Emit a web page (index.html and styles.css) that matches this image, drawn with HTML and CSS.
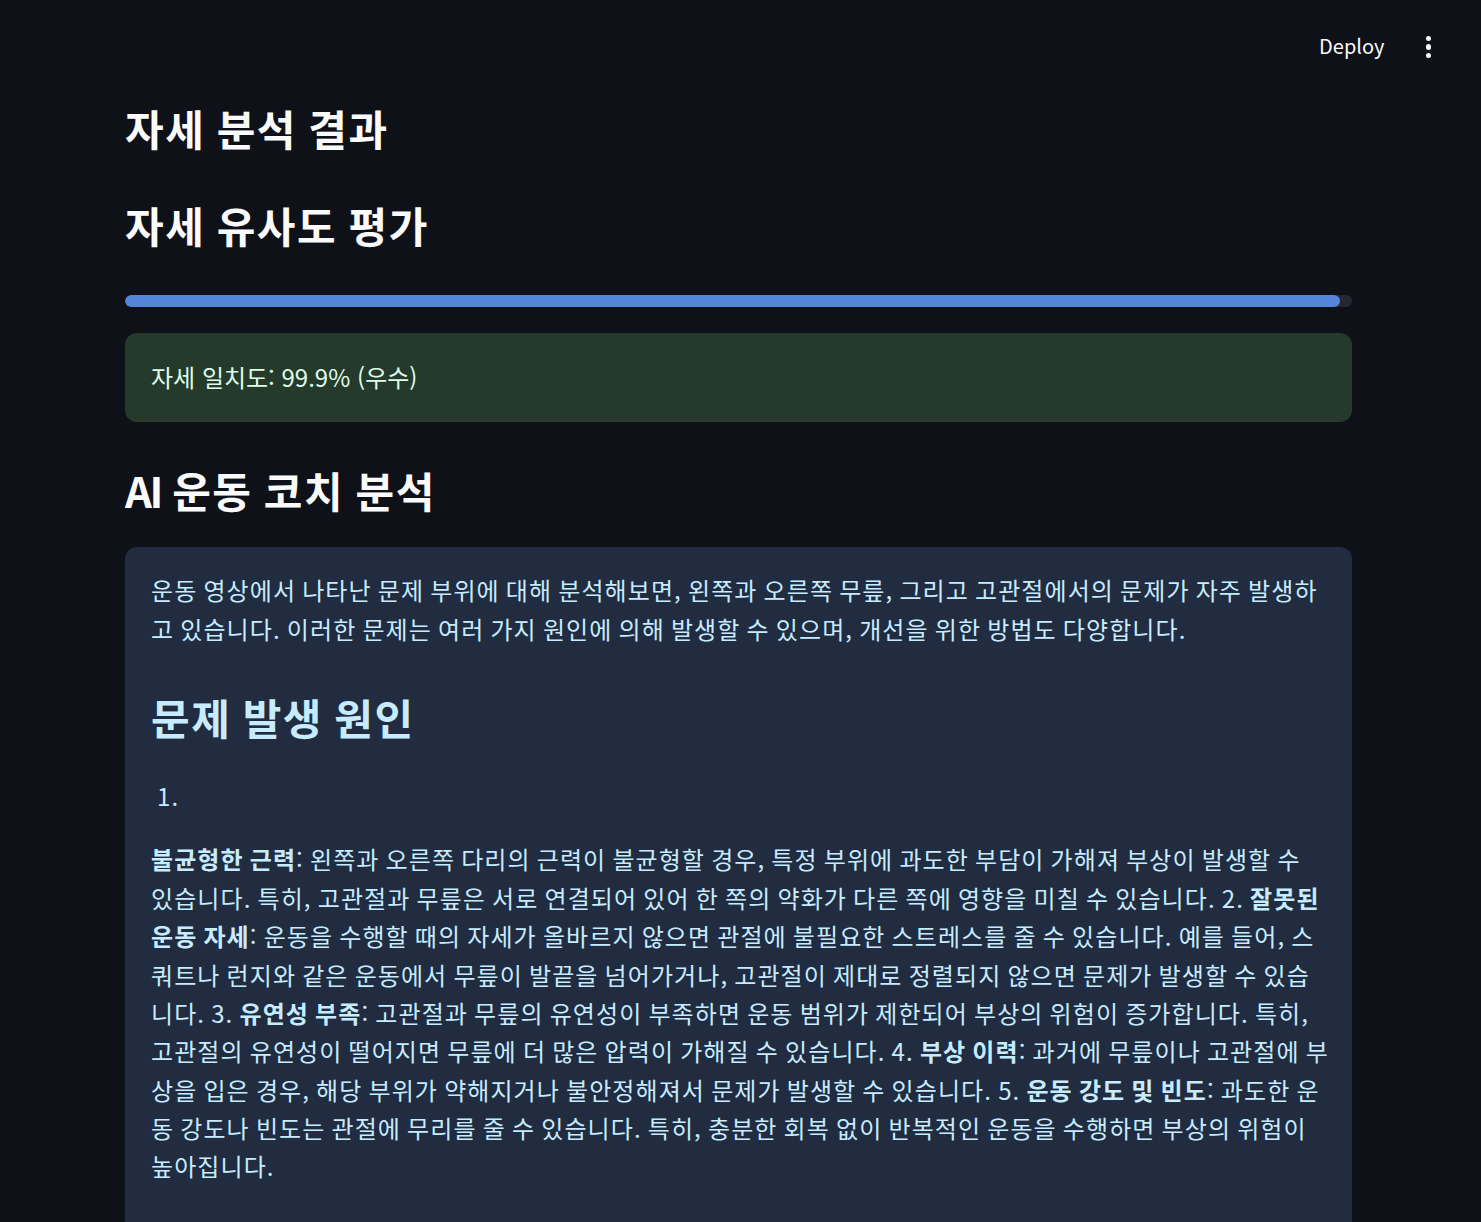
FILE: index.html
```html
<!DOCTYPE html>
<html lang="ko">
<head>
<meta charset="utf-8">
<title>자세 분석 결과</title>
<link rel="stylesheet" href="styles.css">
</head>
<body>
<header class="topbar">
  <span class="deploy">Deploy</span>
  <span class="kebab" aria-label="menu"><i></i><i></i><i></i></span>
</header>
<main class="main">
  <h1 class="title">자세 분석 결과</h1>
  <h2 class="header h-sim">자세 유사도 평가</h2>
  <div class="progress"><div class="progress-fill" style="width:99%"></div></div>
  <div class="alert success">자세 일치도: 99.9% (우수)</div>
  <h2 class="header h-ai"><span class="lat">AI</span> 운동 코치 분석</h2>
  <div class="alert info">
    <p class="intro">운동 영상에서 나타난 문제 부위에 대해 분석해보면, 왼쪽과 오른쪽 무릎, 그리고 고관절에서의 문제가 자주 발생하고 있습니다. 이러한 문제는 여러 가지 원인에 의해 발생할 수 있으며, 개선을 위한 방법도 다양합니다.</p>
    <h3 class="info-head">문제 발생 원인</h3>
    <ol class="causes"><li></li></ol>
    <p class="body"><strong>불균형한 근력</strong>: 왼쪽과 오른쪽 다리의 근력이 불균형할 경우, 특정 부위에 과도한 부담이 가해져 부상이 발생할 수 있습니다. 특히, 고관절과 무릎은 서로 연결되어 있어 한 쪽의 약화가 다른 쪽에 영향을 미칠 수 있습니다. 2. <strong>잘못된 운동 자세</strong>: 운동을 수행할 때의 자세가 올바르지 않으면 관절에 불필요한 스트레스를 줄 수 있습니다. 예를 들어, 스쿼트나 런지와 같은 운동에서 무릎이 발끝을 넘어가거나, 고관절이 제대로 정렬되지 않으면 문제가 발생할 수 있습니다. 3. <strong>유연성 부족</strong>: 고관절과 무릎의 유연성이 부족하면 운동 범위가 제한되어 부상의 위험이 증가합니다. 특히, 고관절의 유연성이 떨어지면 무릎에 더 많은 압력이 가해질 수 있습니다. 4. <strong>부상 이력</strong>: 과거에 무릎이나 고관절에 부상을 입은 경우, 해당 부위가 약해지거나 불안정해져서 문제가 발생할 수 있습니다. 5. <strong>운동 강도 및 빈도</strong>: 과도한 운동 강도나 빈도는 관절에 무리를 줄 수 있습니다. 특히, 충분한 회복 없이 반복적인 운동을 수행하면 부상의 위험이 높아집니다.</p>
  </div>
</main>
</body>
</html>
```
FILE: styles.css
```css
* { box-sizing: border-box; }
html, body {
  margin: 0;
  padding: 0;
  background: #0e1117;
  color: #fafafa;
  font-family: "Noto Sans CJK KR", "Noto Sans", sans-serif;
}
body { height: 1222px; overflow: hidden; }

.topbar {
  height: 94px;
  display: flex;
  align-items: center;
  justify-content: flex-end;
  padding-right: 50px;
  gap: 41px;
}
.deploy {
  font-size: 20px;
  color: #fafafa;
  line-height: 1;
  margin-top: -2px;
}
.kebab {
  display: flex;
  flex-direction: column;
  gap: 3px;
}
.kebab i {
  display: block;
  width: 5.5px;
  height: 5.5px;
  border-radius: 50%;
  background: #fafafa;
}

.main {
  padding: 0 129px 0 125px;
  display: flex;
  flex-direction: column;
}

.title, .header, .info-head {
  font-size: 42px;
  font-weight: 700;
  line-height: 1.2;
  margin: 0;
  letter-spacing: 0.036em;
  word-spacing: -0.045em;
}
.lat { letter-spacing: -0.06em; }
.title { margin-top: 9px; }
.h-sim { margin-top: 47px; }
.h-ai { margin-top: 43px; }

.progress {
  margin-top: 44px;
  height: 12px;
  border-radius: 6px;
  background: #262730;
  overflow: hidden;
}
.progress-fill {
  height: 100%;
  border-radius: 6px;
  background: #5584db;
}

.alert {
  border-radius: 12px;
  padding: 0 22.5px 0 26px;
  font-size: 24px;
  line-height: 1.6;
}
.success {
  margin-top: 26px;
  height: 89px;
  display: flex;
  align-items: center;
  background: #263a2c;
  color: #dffde9;
}
.info {
  margin-top: 32px;
  background: #212c40;
  color: #c7ebff;
  padding-top: 24px;
  padding-bottom: 120px;
  letter-spacing: 0.045em;
  word-spacing: -0.07em;
}
.info p { margin: 0; }
.info strong { font-weight: 700; }
.info-head {
  margin-top: 44px;
  color: #c7ebff;
}
.causes {
  margin: 35px 0 0 0;
  padding: 0 0 0 6px;
  list-style-position: inside;
}
.causes li { min-height: 38.4px; }
.info .body { margin-top: 24.6px; }
```
